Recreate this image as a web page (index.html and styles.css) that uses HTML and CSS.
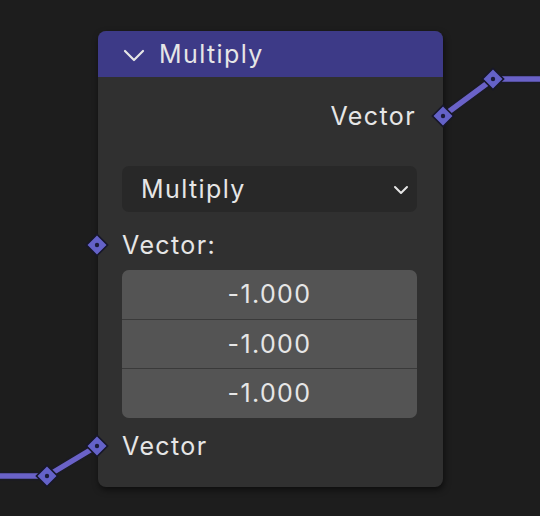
FILE: index.html
```html
<!DOCTYPE html>
<html>
<head>
<meta charset="utf-8">
<link rel="stylesheet" href="styles.css">
</head>
<body>
<div class="canvas">
  <div class="node">
    <div class="node-header">
      <svg class="hdr-chevron" width="22" height="14" viewBox="0 0 22 14"><polyline points="2,3 11,12 20,3" fill="none" stroke="#e6e6e6" stroke-width="2.2" stroke-linecap="round" stroke-linejoin="round"/></svg>
      <span class="node-title">Multiply</span>
    </div>
    <div class="node-body">
      <div class="row row-out">Vector</div>
      <div class="dropdown">
        <span>Multiply</span>
        <svg class="dd-chevron" width="16" height="10" viewBox="0 0 16 10"><polyline points="2,2 8,8 14,2" fill="none" stroke="#e6e6e6" stroke-width="2" stroke-linecap="round" stroke-linejoin="round"/></svg>
      </div>
      <div class="row row-label">Vector:</div>
      <div class="fields">
        <div class="field">-1.000</div>
        <div class="field">-1.000</div>
        <div class="field">-1.000</div>
      </div>
      <div class="row row-in">Vector</div>
    </div>
  </div>
  <svg class="links" width="540" height="516" viewBox="0 0 540 516">
    <g fill="none" stroke-linecap="butt" stroke-linejoin="round">
      <polyline points="443,116 493,79 540,79" stroke="#1b1b24" stroke-width="9"/>
      <polyline points="443,116 493,79 540,79" stroke="#6a62c8" stroke-width="5.5"/>
      <polyline points="97,446 47,476 0,476" stroke="#1b1b24" stroke-width="9"/>
      <polyline points="97,446 47,476 0,476" stroke="#6a62c8" stroke-width="5.5"/>
    </g>
    <g fill="#6462c8" stroke="#17172a" stroke-width="1.6">
      <rect x="-7.5" y="-7.5" width="15" height="15" transform="translate(443 116) rotate(45)"/>
      <rect x="-7.5" y="-7.5" width="15" height="15" transform="translate(493 79) rotate(45)"/>
      <rect x="-7.5" y="-7.5" width="15" height="15" transform="translate(97 245) rotate(45)"/>
      <rect x="-7.5" y="-7.5" width="15" height="15" transform="translate(97 446) rotate(45)"/>
      <rect x="-7.5" y="-7.5" width="15" height="15" transform="translate(47 476) rotate(45)"/>
    </g>
    <g fill="#1c1c3a">
      <circle cx="443" cy="116" r="2.2"/>
      <circle cx="493" cy="79" r="2.2"/>
      <circle cx="97" cy="245" r="2.2"/>
      <circle cx="97" cy="446" r="2.2"/>
      <circle cx="47" cy="476" r="2.2"/>
    </g>
  </svg>
</div>
</body>
</html>
```
FILE: styles.css
```css
html, body {
  margin: 0;
  padding: 0;
  background: #1d1d1d;
}
.canvas {
  position: relative;
  width: 540px;
  height: 516px;
  overflow: hidden;
  padding: 31px 0 0 98px;
  box-sizing: border-box;
  font-family: Inter, "Noto Sans", "DejaVu Sans", sans-serif;
  color: #e6e6e6;
  font-size: 25px;
  letter-spacing: 1.4px;
}
.node {
  width: 345px;
  height: 456px;
  background: #303030;
  border-radius: 8px;
  box-shadow: 1px 3px 6px rgba(0, 0, 0, 0.55);
  display: flex;
  flex-direction: column;
}
.node-header {
  height: 46px;
  background: #3d3a87;
  border-radius: 8px 8px 0 0;
  display: flex;
  align-items: center;
  padding-left: 25px;
  box-sizing: border-box;
}
.hdr-chevron {
  margin-top: 2px;
}
.node-title {
  margin-left: 14px;
  line-height: 1;
}
.node-body {
  display: flex;
  flex-direction: column;
  padding: 0 26px 0 24px;
}
.row {
  height: 46px;
  display: flex;
  align-items: center;
  line-height: 1;
}
.row-out {
  margin-top: 16px;
  justify-content: flex-end;
  padding-right: 1px;
}
.dropdown {
  margin-top: 27px;
  height: 46px;
  background: #282828;
  border-radius: 7px;
  display: flex;
  align-items: center;
  justify-content: space-between;
  padding: 0 8px 0 19px;
  box-sizing: border-box;
}
.dd-chevron {
  margin-top: 2px;
}
.row-label {
  margin-top: 10px;
}
.fields {
  margin-top: 2px;
  height: 148px;
  border-radius: 7px;
  overflow: hidden;
  display: flex;
  flex-direction: column;
  background: #3a3a3a;
  gap: 1px;
}
.field {
  flex: 1;
  background: #545454;
  display: flex;
  align-items: center;
  justify-content: center;
  line-height: 1;
}
.row-in {
  margin-top: 5px;
}
.links {
  position: absolute;
  left: 0;
  top: 0;
  pointer-events: none;
}
```
